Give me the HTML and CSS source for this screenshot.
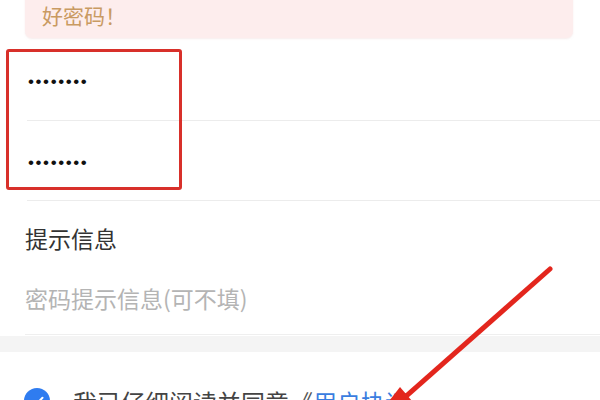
FILE: index.html
```html
<!DOCTYPE html>
<html lang="zh-CN">
<head>
<meta charset="utf-8">
<link rel="stylesheet" href="styles.css">
</head>
<body>
<div class="page">
  <div class="notice">
    <p class="notice-line">为了您的账户安全，建议您设置一个安全等级高的</p>
    <p class="notice-line">好密码！</p>
  </div>

  <div class="group">
    <div class="row pwd"><span class="dots">••••••••</span></div>
    <div class="row pwd"><span class="dots">••••••••</span></div>
  </div>

  <div class="hint">
    <div class="hint-label">提示信息</div>
    <div class="hint-input">密码提示信息(可不填)</div>
  </div>

  <div class="band"></div>

  <div class="agree">
    <span class="check">
      <svg width="26" height="26" viewBox="0 0 26 26"><circle cx="13" cy="13" r="13" fill="#2f7cf0"/><path d="M7.5 13.5l3.8 3.8 7.2-7.6" fill="none" stroke="#fff" stroke-width="2" stroke-linecap="round" stroke-linejoin="round"/></svg>
    </span>
    <span class="agree-text">我已仔细阅读并同意<span class="quote">《</span><span class="link">用户协议</span></span>
  </div>

  <div class="mark-box"></div>
  <svg class="mark-arrow" width="600" height="400" viewBox="0 0 600 400">
    <line x1="550" y1="269" x2="395" y2="406" stroke="#e3261d" stroke-width="5" stroke-linecap="round"/>
    <polygon points="412,401 400,387 365,432" fill="#e3261d"/>
  </svg>
</div>
</body>
</html>
```

FILE: styles.css
```css
html, body {
  margin: 0;
  padding: 0;
  background: #ffffff;
}
.page {
  position: relative;
  width: 600px;
  height: 400px;
  overflow: hidden;
  font-family: "Noto Sans CJK SC", "Noto Sans", sans-serif;
  background: #ffffff;
}
.notice {
  margin: -30px 27px 0 25px;
  padding: 0 17px 8px;
  background: #fdeded;
  border-radius: 7px;
  box-shadow: 0 1px 2px rgba(230, 200, 200, 0.35);
}
.notice-line {
  margin: 0;
  font-size: 21px;
  line-height: 30px;
  color: #c99a62;
}
.row {
  margin-left: 27px;
  border-bottom: 1px solid #ececec;
  display: flex;
  align-items: center;
  box-sizing: border-box;
  padding-top: 4px;
}
.pwd {
  height: 80px;
}
.pwd:first-child {
  height: 83px;
}
.dots {
  margin-left: 1px;
  font-family: "Liberation Sans", sans-serif;
  font-size: 17px;
  letter-spacing: 1.6px;
  color: #111;
  line-height: 1;
}
.hint {
  margin-left: 25px;
  padding-top: 21px;
  padding-bottom: 20px;
  border-bottom: 1px solid #efefef;
}
.hint-label {
  font-size: 23px;
  line-height: 32px;
  color: #333333;
}
.hint-input {
  margin-top: 28px;
  font-size: 23px;
  line-height: 32px;
  color: #b4b4b4;
}
.band {
  height: 16px;
  margin-top: 1px;
  background: #f4f4f4;
}
.agree {
  display: flex;
  align-items: flex-start;
  padding: 36px 0 0 24px;
}
.check {
  display: block;
  width: 26px;
  height: 26px;
}
.check svg {
  display: block;
}
.agree-text {
  margin-left: 23px;
  margin-top: -1px;
  font-size: 24px;
  line-height: 30px;
  color: #444444;
}
.quote {
  color: #555555;
}
.link {
  color: #3a7de0;
}
.mark-box {
  position: absolute;
  left: 6px;
  top: 49px;
  width: 170px;
  height: 135px;
  border: 3.5px solid #d8302a;
  border-radius: 3px;
}
.mark-arrow {
  position: absolute;
  left: 0;
  top: 0;
}
```
